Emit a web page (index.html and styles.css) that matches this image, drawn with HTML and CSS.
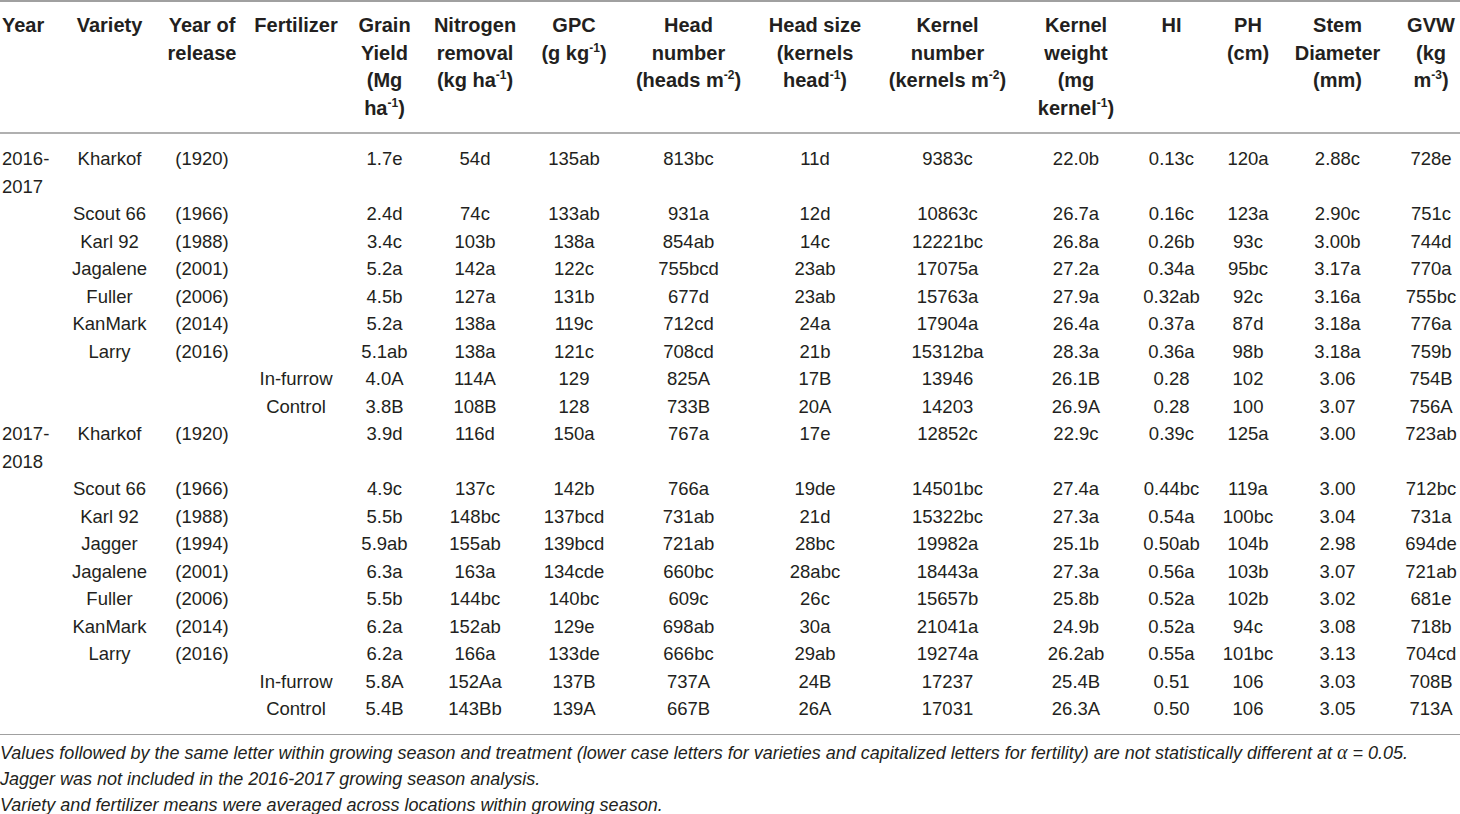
FILE: index.html
```html
<!DOCTYPE html>
<html>
<head>
<meta charset="utf-8">
<link rel="stylesheet" href="styles.css">
</head>
<body>
<table class="data">
<colgroup>
<col class="c-year"><col class="c-var"><col class="c-rel"><col class="c-fert"><col class="c-gy"><col class="c-nr"><col class="c-gpc"><col class="c-hn"><col class="c-hs"><col class="c-kn"><col class="c-kw"><col class="c-hi"><col class="c-ph"><col class="c-sd"><col class="c-gvw">
</colgroup>
<thead>
<tr>
<th class="left">Year</th>
<th>Variety</th>
<th>Year of<br>release</th>
<th>Fertilizer</th>
<th>Grain<br>Yield<br>(Mg<br>ha<sup>-1</sup>)</th>
<th>Nitrogen<br>removal<br>(kg ha<sup>-1</sup>)</th>
<th>GPC<br>(g kg<sup>-1</sup>)</th>
<th>Head<br>number<br>(heads m<sup>-2</sup>)</th>
<th>Head size<br>(kernels<br>head<sup>-1</sup>)</th>
<th>Kernel<br>number<br>(kernels m<sup>-2</sup>)</th>
<th class="kw">Kernel<br>weight<br>(mg<br>kernel<sup>-1</sup>)</th>
<th>HI</th>
<th class="ph">PH<br>(cm)</th>
<th>Stem<br>Diameter<br>(mm)</th>
<th class="gvw">GVW<br>(kg<br>m<sup>-3</sup>)</th>
</tr>
</thead>
<tbody>
<tr class="first"><td class="left">2016-<br>2017</td><td>Kharkof</td><td>(1920)</td><td></td><td>1.7e</td><td>54d</td><td>135ab</td><td>813bc</td><td>11d</td><td>9383c</td><td class="kw">22.0b</td><td>0.13c</td><td class="ph">120a</td><td>2.88c</td><td class="gvw">728e</td></tr>
<tr><td></td><td>Scout 66</td><td>(1966)</td><td></td><td>2.4d</td><td>74c</td><td>133ab</td><td>931a</td><td>12d</td><td>10863c</td><td class="kw">26.7a</td><td>0.16c</td><td class="ph">123a</td><td>2.90c</td><td class="gvw">751c</td></tr>
<tr><td></td><td>Karl 92</td><td>(1988)</td><td></td><td>3.4c</td><td>103b</td><td>138a</td><td>854ab</td><td>14c</td><td>12221bc</td><td class="kw">26.8a</td><td>0.26b</td><td class="ph">93c</td><td>3.00b</td><td class="gvw">744d</td></tr>
<tr><td></td><td>Jagalene</td><td>(2001)</td><td></td><td>5.2a</td><td>142a</td><td>122c</td><td>755bcd</td><td>23ab</td><td>17075a</td><td class="kw">27.2a</td><td>0.34a</td><td class="ph">95bc</td><td>3.17a</td><td class="gvw">770a</td></tr>
<tr><td></td><td>Fuller</td><td>(2006)</td><td></td><td>4.5b</td><td>127a</td><td>131b</td><td>677d</td><td>23ab</td><td>15763a</td><td class="kw">27.9a</td><td>0.32ab</td><td class="ph">92c</td><td>3.16a</td><td class="gvw">755bc</td></tr>
<tr><td></td><td>KanMark</td><td>(2014)</td><td></td><td>5.2a</td><td>138a</td><td>119c</td><td>712cd</td><td>24a</td><td>17904a</td><td class="kw">26.4a</td><td>0.37a</td><td class="ph">87d</td><td>3.18a</td><td class="gvw">776a</td></tr>
<tr><td></td><td>Larry</td><td>(2016)</td><td></td><td>5.1ab</td><td>138a</td><td>121c</td><td>708cd</td><td>21b</td><td>15312ba</td><td class="kw">28.3a</td><td>0.36a</td><td class="ph">98b</td><td>3.18a</td><td class="gvw">759b</td></tr>
<tr><td></td><td></td><td></td><td>In-furrow</td><td>4.0A</td><td>114A</td><td>129</td><td>825A</td><td>17B</td><td>13946</td><td class="kw">26.1B</td><td>0.28</td><td class="ph">102</td><td>3.06</td><td class="gvw">754B</td></tr>
<tr><td></td><td></td><td></td><td>Control</td><td>3.8B</td><td>108B</td><td>128</td><td>733B</td><td>20A</td><td>14203</td><td class="kw">26.9A</td><td>0.28</td><td class="ph">100</td><td>3.07</td><td class="gvw">756A</td></tr>
<tr><td class="left">2017-<br>2018</td><td>Kharkof</td><td>(1920)</td><td></td><td>3.9d</td><td>116d</td><td>150a</td><td>767a</td><td>17e</td><td>12852c</td><td class="kw">22.9c</td><td>0.39c</td><td class="ph">125a</td><td>3.00</td><td class="gvw">723ab</td></tr>
<tr><td></td><td>Scout 66</td><td>(1966)</td><td></td><td>4.9c</td><td>137c</td><td>142b</td><td>766a</td><td>19de</td><td>14501bc</td><td class="kw">27.4a</td><td>0.44bc</td><td class="ph">119a</td><td>3.00</td><td class="gvw">712bc</td></tr>
<tr><td></td><td>Karl 92</td><td>(1988)</td><td></td><td>5.5b</td><td>148bc</td><td>137bcd</td><td>731ab</td><td>21d</td><td>15322bc</td><td class="kw">27.3a</td><td>0.54a</td><td class="ph">100bc</td><td>3.04</td><td class="gvw">731a</td></tr>
<tr><td></td><td>Jagger</td><td>(1994)</td><td></td><td>5.9ab</td><td>155ab</td><td>139bcd</td><td>721ab</td><td>28bc</td><td>19982a</td><td class="kw">25.1b</td><td>0.50ab</td><td class="ph">104b</td><td>2.98</td><td class="gvw">694de</td></tr>
<tr><td></td><td>Jagalene</td><td>(2001)</td><td></td><td>6.3a</td><td>163a</td><td>134cde</td><td>660bc</td><td>28abc</td><td>18443a</td><td class="kw">27.3a</td><td>0.56a</td><td class="ph">103b</td><td>3.07</td><td class="gvw">721ab</td></tr>
<tr><td></td><td>Fuller</td><td>(2006)</td><td></td><td>5.5b</td><td>144bc</td><td>140bc</td><td>609c</td><td>26c</td><td>15657b</td><td class="kw">25.8b</td><td>0.52a</td><td class="ph">102b</td><td>3.02</td><td class="gvw">681e</td></tr>
<tr><td></td><td>KanMark</td><td>(2014)</td><td></td><td>6.2a</td><td>152ab</td><td>129e</td><td>698ab</td><td>30a</td><td>21041a</td><td class="kw">24.9b</td><td>0.52a</td><td class="ph">94c</td><td>3.08</td><td class="gvw">718b</td></tr>
<tr><td></td><td>Larry</td><td>(2016)</td><td></td><td>6.2a</td><td>166a</td><td>133de</td><td>666bc</td><td>29ab</td><td>19274a</td><td class="kw">26.2ab</td><td>0.55a</td><td class="ph">101bc</td><td>3.13</td><td class="gvw">704cd</td></tr>
<tr><td></td><td></td><td></td><td>In-furrow</td><td>5.8A</td><td>152Aa</td><td>137B</td><td>737A</td><td>24B</td><td>17237</td><td class="kw">25.4B</td><td>0.51</td><td class="ph">106</td><td>3.03</td><td class="gvw">708B</td></tr>
<tr class="last"><td></td><td></td><td></td><td>Control</td><td>5.4B</td><td>143Bb</td><td>139A</td><td>667B</td><td>26A</td><td>17031</td><td class="kw">26.3A</td><td>0.50</td><td class="ph">106</td><td>3.05</td><td class="gvw">713A</td></tr>
</tbody>
</table>
<div class="notes">
<p>Values followed by the same letter within growing season and treatment (lower case letters for varieties and capitalized letters for fertility) are not statistically different at <span class="alpha">α</span> = 0.05.</p>
<p>Jagger was not included in the 2016-2017 growing season analysis.</p>
<p>Variety and fertilizer means were averaged across locations within growing season.</p>
</div>
</body>
</html>
```
FILE: styles.css
```css
html, body {
  margin: 0;
  padding: 0;
  background: #ffffff;
}
body {
  font-family: "Liberation Sans", Arial, sans-serif;
  color: #231f20;
  width: 1460px;
  overflow: hidden;
}
.data {
  width: 1460px;
  table-layout: fixed;
  border-collapse: collapse;
  font-size: 18.5px;
  line-height: 27.5px;
}
.c-year { width: 60px; }
.c-var { width: 99px; }
.c-rel { width: 86px; }
.c-fert { width: 102px; }
.c-gy { width: 75px; }
.c-nr { width: 106px; }
.c-gpc { width: 92px; }
.c-hn { width: 137px; }
.c-hs { width: 116px; }
.c-kn { width: 149px; }
.c-kw { width: 116px; }
.c-hi { width: 67px; }
.c-ph { width: 78px; }
.c-sd { width: 109px; }
.c-gvw { width: 68px; }
.data thead tr {
  border-top: 2px solid #a0a0a0;
  border-bottom: 2px solid #b0b0b0;
}
.data th {
  font-weight: bold;
  font-size: 20px;
  text-align: center;
  vertical-align: top;
  padding: 10px 0 10px 0;
  white-space: nowrap;
}
.data td {
  text-align: center;
  vertical-align: top;
  padding: 0;
  white-space: nowrap;
}
.data .left {
  text-align: left;
  padding-left: 2px;
}
.data .kw {
  padding-right: 8px;
}
.data .ph {
  padding-left: 8px;
}
.data .gvw {
  padding-left: 10px;
}
.data tr.first td {
  padding-top: 11px;
}
.data tr.last td {
  padding-bottom: 11px;
}
.data tbody {
  border-bottom: 1px solid #a0a0a0;
}
.data sup {
  font-size: 12px;
  line-height: 0;
  vertical-align: 8px;
}
.notes {
  font-style: italic;
  font-size: 18px;
  line-height: 26px;
  padding-top: 4px;
}
.notes p {
  margin: 0;
}
.alpha {
  font-family: "Liberation Serif", serif;
  font-size: 20px;
}
```
